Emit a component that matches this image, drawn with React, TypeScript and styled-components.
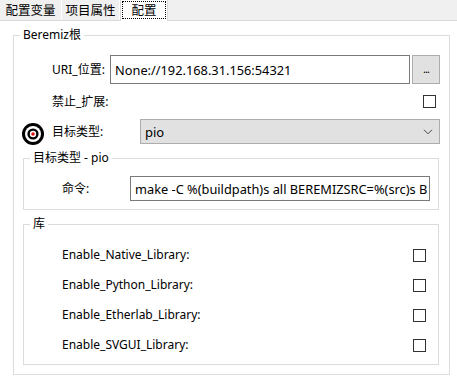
import React from 'react';
import styled, { createGlobalStyle } from 'styled-components';

const GlobalStyle = createGlobalStyle`
    html, body {
        margin: 0;
        padding: 0;
        background: #ffffff;
    }
    body {
        font-family: "Noto Sans", "Noto Sans CJK SC", sans-serif;
        font-size: 12px;
        color: #000;
    }
`;

const Page = styled.div`
    width: 457px;
    height: 380px;
    overflow: hidden;
    background: #fff;
`;

const TabBar = styled.div`
    display: flex;
    height: 20px;
    background: #f0f0f0;
    border-bottom: 1px solid #dadada;
`;

const Tab = styled.div<{ $w: number; $active?: boolean }>`
    box-sizing: border-box;
    width: ${(p) => p.$w}px;
    height: ${(p) => (p.$active ? 21 : 20)}px;
    display: flex;
    align-items: center;
    justify-content: center;
    background: ${(p) => (p.$active ? '#ffffff' : '#f0f0f0')};
    border-right: 1px solid ${(p) => (p.$active ? '#dadada' : '#ffffff')};
    border-left: ${(p) => (p.$active ? '1px solid #dadada' : 'none')};
    font-family: "Noto Sans CJK SC", sans-serif;
    font-size: 12.5px;
    line-height: 16px;
    padding: ${(p) => (p.$active ? '0 1px' : '0')};
`;

const FocusRect = styled.span`
    display: flex;
    align-items: center;
    justify-content: center;
    width: 100%;
    height: 18px;
    margin-top: -2px;
    box-sizing: border-box;
    border: 1px dotted #000;
`;

const Group = styled.fieldset<{ $inner?: boolean }>`
    margin: ${(p) => (p.$inner ? '6px 10px 0 9px' : '6px 7px 0 13px')};
    padding: ${(p) => (p.$inner ? '0 8px 0 0' : '0 0 9px 0')};
    border: 1px solid #dcdcdc;
    min-width: 0;
    display: flex;
    flex-direction: column;
`;

const Legend = styled.legend`
    margin-left: 6px;
    padding: 0 3px;
    font-size: 12px;
    line-height: 16px;
`;

const Spacer = styled.div<{ $h: number }>`
    height: ${(p) => p.$h}px;
    flex: 0 0 auto;
`;

const Row = styled.div<{ $h: number; $pl?: number; $pr?: number }>`
    display: flex;
    align-items: center;
    height: ${(p) => p.$h}px;
    padding-left: ${(p) => p.$pl ?? 38}px;
    padding-right: ${(p) => p.$pr ?? 0}px;
`;

const Label = styled.span<{ $w?: number }>`
    width: ${(p) => (p.$w ? `${p.$w}px` : 'auto')};
    flex: ${(p) => (p.$w ? '0 0 auto' : '1 1 auto')};
    white-space: nowrap;
    line-height: 16px;
`;

const TextInput = styled.div<{ $h: number }>`
    flex: 1;
    min-width: 0;
    height: ${(p) => p.$h}px;
    box-sizing: border-box;
    border: 1px solid #7a7a7a;
    background: #fff;
    display: flex;
    align-items: center;
    padding-left: 4px;
    font-size: 12.8px;
    white-space: nowrap;
    overflow: hidden;
`;

const SmallButton = styled.div`
    width: 28px;
    height: 29px;
    margin-left: 2px;
    box-sizing: border-box;
    border: 1px solid #adadad;
    background: #e1e1e1;
    display: flex;
    align-items: center;
    justify-content: center;
    font-size: 11px;
    letter-spacing: -1px;
    padding-bottom: 3px;
`;

const Check = styled.span`
    width: 13px;
    height: 13px;
    box-sizing: border-box;
    border: 1px solid #333;
    background: #fff;
    flex: 0 0 auto;
`;

const Select = styled.div`
    flex: 1;
    height: 25px;
    box-sizing: border-box;
    border: 1px solid #adadad;
    background: #e1e1e1;
    display: flex;
    align-items: center;
    justify-content: space-between;
    padding: 0 6px 0 4px;
    font-size: 13px;
`;

const IconBox = styled.span`
    width: 30px;
    display: flex;
    align-items: center;
    flex: 0 0 auto;
    margin-top: 4px;
`;

const TargetIcon = () => (
    <svg width="22" height="22" viewBox="0 0 22 22">
        <circle cx="11" cy="11" r="11" fill="#000" />
        <circle cx="11" cy="11" r="8" fill="#fff" />
        <circle cx="11" cy="11" r="5.6" fill="#000" />
        <circle cx="11" cy="11" r="3.2" fill="#fff" />
        <circle cx="11" cy="11" r="1.8" fill="#e01010" />
    </svg>
);

const Chevron = () => (
    <svg width="10" height="6" viewBox="0 0 10 6">
        <path d="M1 0.8 L5 4.8 L9 0.8" fill="none" stroke="#444" strokeWidth="1" />
    </svg>
);

const libs = ['Enable_Native_Library:', 'Enable_Python_Library:', 'Enable_Etherlab_Library:', 'Enable_SVGUI_Library:'];

const App = () => {
    return (
        <Page>
            <GlobalStyle />
            <TabBar>
                <Tab $w={62}>配置变量</Tab>
                <Tab $w={58}>项目属性</Tab>
                <Tab $w={48} $active>
                    <FocusRect>配置</FocusRect>
                </Tab>
            </TabBar>

            <Group>
                <Legend>Beremiz根</Legend>
                <Spacer $h={12} />
                <Row $h={29} $pr={9}>
                    <Label $w={58}>URI_位置:</Label>
                    <TextInput $h={29}>None://192.168.31.156:54321</TextInput>
                    <SmallButton>...</SmallButton>
                </Row>
                <Row $h={35} $pr={13}>
                    <Label>禁止_扩展:</Label>
                    <Check />
                </Row>
                <Row $h={25} $pl={8} $pr={9}>
                    <IconBox>
                        <TargetIcon />
                    </IconBox>
                    <Label $w={88}>目标类型:</Label>
                    <Select>
                        <span>pio</span>
                        <Chevron />
                    </Select>
                </Row>

                <Group $inner>
                    <Legend>目标类型 - pio</Legend>
                    <Spacer $h={10} />
                    <Row $h={25}>
                        <Label $w={68}>命令:</Label>
                        <TextInput $h={25}>make -C %(buildpath)s all BEREMIZSRC=%(src)s B</TextInput>
                    </Row>
                    <Spacer $h={8} />
                </Group>

                <Group $inner>
                    <Legend>库</Legend>
                    <Spacer $h={8} />
                    {libs.map((l) => (
                        <Row key={l} $h={30} $pr={4}>
                            <Label>{l}</Label>
                            <Check />
                        </Row>
                    ))}
                    <Spacer $h={4} />
                </Group>
            </Group>
        </Page>
    );
};

export default App;
